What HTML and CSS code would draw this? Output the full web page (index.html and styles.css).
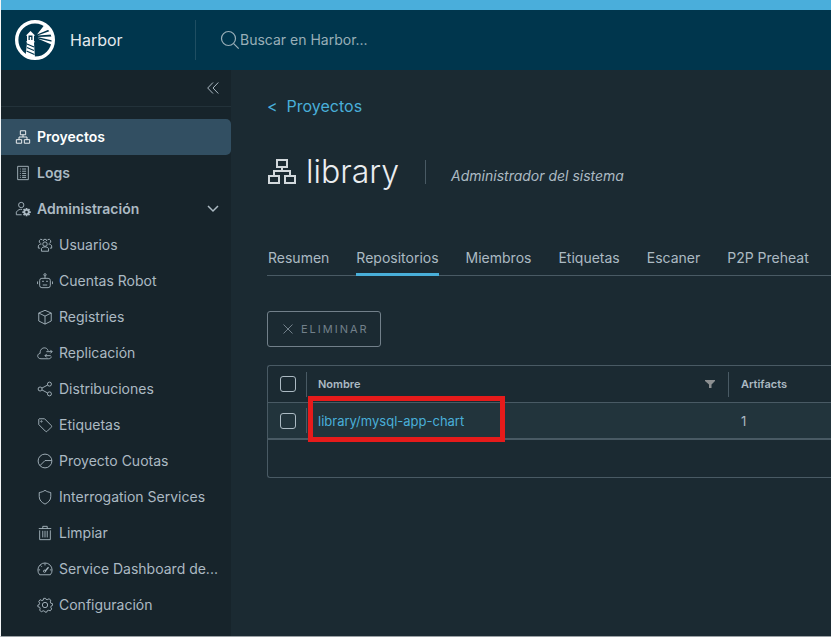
FILE: index.html
```html
<!DOCTYPE html>
<html lang="es">
<head>
<meta charset="utf-8">
<meta name="viewport" content="width=device-width, initial-scale=1">
<title>Harbor</title>
<link rel="stylesheet" href="styles.css">
</head>
<body>
<div class="app">
  <div class="topline"></div>
  <header class="header">
    <a class="brand" href="#">
      <svg class="logo" viewBox="0 0 40 40" aria-hidden="true">
        <circle cx="20" cy="20" r="18.3" fill="none" stroke="#fff" stroke-width="3.4"/>
        <path fill="#fff" d="M11.500 15 15.500 11l4 4v1h-.5v5h.5v1.500h-.5L20 38.500l-9.500-2L12 22.500h-.5V21h.5v-5h-.5zM22 14.500 29 5.500l5 4zM22.500 15.500 35 11l2 3.500zM22.500 17l15-.5v4zM22.500 18.500 38 22l-.5 3z"/>
        <path fill="#00364d" d="M13.500 15.500h4V20h-4z"/>
        <path fill="#fff" d="M14.800 17h1.400v3h-1.400z"/>
        <path d="m12 24 7 3M12 27.500l7 3M11.500 31l8 3.500" stroke="#00364d" stroke-width="1.200"/>
      </svg>
      <span>Harbor</span>
    </a>
    <label class="search">
      <svg class="search-icon" viewBox="0 0 20 20" fill="none" stroke="currentColor" stroke-width="1.200" aria-hidden="true"><circle cx="8.500" cy="8.500" r="7"/><path d="m13.700 13.700 5 5"/></svg>
      <input type="text" placeholder="Buscar en Harbor..." aria-label="Buscar en Harbor">
    </label>
  </header>
  <div class="body">
    <nav class="sidebar">
      <div class="collapse-row">
        <button class="collapse" type="button" aria-label="Contraer menú"><svg viewBox="0 0 12 12"><path d="M6 .5.700 6 6 11.500M11.300.500 6 6l5.300 5.500"/></svg></button>
      </div>
      <ul class="menu">
        <li><a class="item active" href="#"><svg viewBox="0 0 36 36"><path d="M12 4h12v9H12zM3 24h12v8H3zM21 24h12v8H21zM18 13v5M9 24v-6h18v6"/></svg><span>Proyectos</span></a></li>
        <li><a class="item" href="#"><svg viewBox="0 0 36 36"><path d="M6 3h24v30H6zM11 9h2M16 9h9M11 14h2M16 14h9M11 19h2M16 19h9M11 24h2M16 24h9M11 28h2M16 28h9"/></svg><span>Logs</span></a></li>
        <li><button class="item" type="button" aria-expanded="true"><svg viewBox="0 0 36 36"><circle cx="14" cy="9" r="6"/><path d="M15 31H3v-6c3-5 8-7 13-6"/><circle cx="26" cy="25" r="5" stroke-width="4"/><path stroke-width="4" d="M26 15.500v4M26 30.500v4M16.500 25h4M31.500 25h4M19.300 18.300l2.800 2.800M29.900 28.900l2.800 2.800M32.700 18.300l-2.800 2.800M22.100 28.900l-2.800 2.800"/></svg><span>Administración</span><svg class="caret" viewBox="0 0 12 12"><path d="m1 3 5 5 5-5"/></svg></button>
          <ul class="submenu">
            <li><a class="item" href="#"><svg viewBox="0 0 36 36"><circle cx="18" cy="16" r="5"/><path d="M10 32v-6c3-5 13-5 16 0v6zM12 6a4.500 4.500 0 1 0-4 8M24 6a4.500 4.500 0 1 1 4 8M3 25v-5c1-3 4-4 7-4M33 25v-5c-1-3-4-4-7-4M3 25h4M33 25h-4M14 9a4 4 0 1 1 8 0"/></svg><span>Usuarios</span></a></li>
            <li><a class="item" href="#"><svg viewBox="0 0 36 36"><rect x="6" y="12" width="24" height="21" rx="5"/><circle cx="18" cy="4" r="2.500"/><path d="M18 7v5M1 19v6M35 19v6M13 27h10"/><path d="M12 19h3M21 19h3" stroke-width="3"/></svg><span>Cuentas Robot</span></a></li>
            <li><a class="item" href="#"><svg viewBox="0 0 36 36"><path d="m18 3 14 6v18l-14 7-14-7V9zM4 9l14 7 14-7M18 16v18"/></svg><span>Registries</span></a></li>
            <li><a class="item" href="#"><svg viewBox="0 0 36 36"><path d="M32 26c0 3-2 5-6 5H9c-9 0-10-11-2-12C6 4 23 3 25 13M34 15H21M30 11l4 4-4 4M18 24h13M22 20l-4 4 4 4"/></svg><span>Replicación</span></a></li>
            <li><a class="item" href="#"><svg viewBox="0 0 36 36"><circle cx="7" cy="18" r="4.500"/><circle cx="28" cy="7" r="4.500"/><circle cx="28" cy="29" r="4.500"/><path d="m11 16 13-7M11 20l13 7"/></svg><span>Distribuciones</span></a></li>
            <li><a class="item" href="#"><svg viewBox="0 0 36 36"><path d="M4 5v12l15 15q2 2 4 0l9-9q2-2 0-4L17 4H5z"/><circle cx="10" cy="10" r="1.500"/></svg><span>Etiquetas</span></a></li>
            <li><a class="item" href="#"><svg viewBox="0 0 36 36"><circle cx="18" cy="18" r="15.500"/><path d="M33 17H18L7 28"/></svg><span>Proyecto Cuotas</span></a></li>
            <li><a class="item" href="#"><svg viewBox="0 0 36 36"><path d="M18 3c4 3 8 4 13 5v9c0 8-5 13-13 17C10 30 5 25 5 17V8c5-1 9-2 13-5z"/></svg><span>Interrogation Services</span></a></li>
            <li><a class="item" href="#"><svg viewBox="0 0 36 36"><path d="M4 8h28M13 8V3h10v5M6 12v21h24V12M13 13v15M18 13v15M23 13v15"/></svg><span>Limpiar</span></a></li>
            <li><a class="item" href="#"><svg viewBox="0 0 36 36"><path d="M6 31a16 16 0 1 1 24 0zM18 5v5M3 20h4M29 20h4M8 10l3 3"/><path d="m18 23 8-9" stroke-width="3"/><circle cx="17" cy="23" r="2.500"/></svg><span>Service Dashboard de...</span></a></li>
            <li><a class="item" href="#"><svg viewBox="0 0 36 36"><circle cx="18" cy="18" r="6"/><path d="m15 3-1 4-3 1-4-2-3 4 2 4-1 3-3 1v4l4 1 1 3-1 4 4 3 4-2 3 1 1 2h4l1-3 3-1 4 1 3-4-2-4 1-3 3-1v-4l-4-1-1-3 1-4-4-3-4 2-3-1-1-2z"/></svg><span>Configuración</span></a></li>
          </ul>
        </li>
      </ul>
    </nav>
    <main class="content">
      <a class="back" href="#"><span>&lt;</span><span>Proyectos</span></a>
      <div class="title-row">
        <svg class="title-icon" viewBox="0 0 28 28" aria-hidden="true"><path d="M9 2h10v7H9zM1 18h10v7H1zM17 18h10v7H17zM14 9v4M6 18v-5h16v5"/></svg>
        <h1>library</h1>
        <em class="role">Administrador del sistema</em>
      </div>
      <div class="tabs" role="tablist">
        <button type="button" role="tab">Resumen</button>
        <button type="button" role="tab" class="selected" aria-selected="true">Repositorios</button>
        <button type="button" role="tab">Miembros</button>
        <button type="button" role="tab">Etiquetas</button>
        <button type="button" role="tab">Escaner</button>
        <button type="button" role="tab">P2P Preheat</button>
      </div>
      <button class="delete" type="button" disabled><svg viewBox="0 0 12 12" aria-hidden="true"><path d="m1.500 1.500 9 9M10.500 1.500l-9 9"/></svg>ELIMINAR</button>
      <table class="grid">
        <thead>
          <tr>
            <th class="check"><input type="checkbox" aria-label="Seleccionar todo"></th>
            <th class="name"><div class="head-cell"><span>Nombre</span><button class="filter" type="button" aria-label="Filtrar"><svg viewBox="0 0 10 10"><path d="M0 1h10v1L6.500 5.500V9H4V5.500L0 2z"/></svg></button></div></th>
            <th class="count">Artifacts</th>
          </tr>
        </thead>
        <tbody>
          <tr>
            <td class="check"><input type="checkbox" aria-label="Seleccionar library/mysql-app-chart"></td>
            <td class="name marked"><a href="#">library/mysql-app-chart</a><span class="marker"></span></td>
            <td class="count">1</td>
          </tr>
        </tbody>
        <tfoot><tr><td colspan="3"></td></tr></tfoot>
      </table>
    </main>
  </div>
</div>
</body>
</html>
```
FILE: styles.css
```css
* { box-sizing: border-box; }
html { background: #fff; }
body {
  margin: 0;
  font-family: Inter, "Noto Sans", sans-serif;
  font-size: 14px;
  line-height: 20px;
  color: #acbac3;
}
a { color: inherit; text-decoration: none; }
button { font: inherit; color: inherit; background: none; border: 0; padding: 0; }
ul { list-style: none; margin: 0; padding: 0; }
svg { fill: none; stroke: currentColor; flex: none; display: block; }

.app {
  display: flex;
  flex-direction: column;
  min-height: 100vh;
  border-left: 1px solid #f4f6f7;
  border-bottom: 1px solid #9ba1a5;
  overflow: hidden;
}
.topline { height: 10px; background: #4aaedb; }
.header { display: flex; align-items: center; height: 60px; background: #00364d; }
.brand {
  display: flex;
  align-items: center;
  gap: 15px;
  width: 195px;
  height: 40px;
  padding-left: 14px;
  border-right: 1px solid #1f4e62;
  color: #e4eaed;
  font-size: 16px;
}
.logo { width: 40px; height: 40px; stroke: none; }
.search { display: flex; flex: 1; align-items: center; padding-left: 24px; color: #99afb8; }
.search-icon { width: 20px; height: 20px; }
.search input {
  flex: 1;
  min-width: 0;
  padding: 0;
  border: 0;
  outline: 0;
  background: none;
  color: inherit;
  font: inherit;
}
.search input::placeholder { color: #99afb8; opacity: 1; }

.body { display: flex; flex: 1; }
.sidebar { flex: none; width: 230px; background: #17242b; }
.collapse-row {
  display: flex;
  align-items: center;
  justify-content: flex-end;
  height: 37px;
  padding-right: 12px;
  border-bottom: 1px solid #23323a;
}
.collapse svg { width: 12px; height: 12px; }
.menu { padding-top: 12px; }
.item {
  display: flex;
  align-items: center;
  gap: 6px;
  width: 100%;
  height: 36px;
  padding: 0 12px 0 14px;
  font-weight: 600;
  text-align: left;
}
.item svg { width: 16px; height: 16px; stroke-width: 2; }
.item .caret { width: 12px; height: 12px; margin-left: auto; stroke-width: 1.5; }
.item.active { background: #324f62; color: #fff; border-radius: 0 5px 5px 0; }
.submenu .item { padding-left: 36px; font-weight: 400; }

.content {
  display: flex;
  flex: 1;
  flex-direction: column;
  align-items: flex-start;
  min-width: 0;
  padding: 26px 0 0 36px;
  background: #1b2a32;
}
.back { display: flex; gap: 9px; font-size: 16px; color: #49afd9; }
.title-row { display: flex; align-items: center; margin-top: 36px; height: 40px; }
.title-icon { width: 28px; height: 28px; margin-left: 1px; stroke: #d2d8dc; stroke-width: 2; }
h1 { margin: 0 0 0 10px; font-size: 32px; line-height: 40px; font-weight: 300; color: #eaedf0; }
.role {
  display: flex;
  align-items: flex-end;
  height: 24px;
  margin-left: 26px;
  padding: 6px 0 0 25px;
  border-left: 1px solid #495a64;
  font-size: 14px;
  line-height: 16px;
}
.tabs {
  display: flex;
  align-self: stretch;
  gap: 27px;
  margin-top: 51px;
  padding-left: 1px;
  box-shadow: inset 0 -1px #495a64;
}
.tabs button { flex: none; height: 33px; border-bottom: 3px solid transparent; }
.tabs .selected { border-bottom-color: #49afd9; }
.delete {
  display: flex;
  align-items: center;
  gap: 7px;
  height: 36px;
  margin-top: 35px;
  padding: 0 11px 0 14px;
  border: 1px solid #72808a;
  border-radius: 3px;
  color: #72808a;
  font-size: 11px;
  letter-spacing: 2px;
}
.delete svg { width: 12px; height: 12px; }

.grid {
  align-self: stretch;
  margin-top: 18px;
  table-layout: fixed;
  border: 1px solid #495a64;
  border-right: 0;
  border-radius: 3px 0 0 3px;
  border-spacing: 0;
  font-size: 13px;
}
.grid th, .grid td { height: 37px; padding: 0; text-align: left; }
.grid th { font-size: 11px; font-weight: 600; border-bottom: 1px solid #495a64; }
.grid tbody td { background: #22343c; border-bottom: 2px solid #495a64; }
.grid .check { width: 39px; padding-left: 12px; }
.grid .name { width: 422px; padding-left: 11px; }
.grid th.count, .grid td.count { padding-left: 12px; }
.grid th.check, .grid th.name, .grid td.check {
  background-image: linear-gradient(#495a64, #495a64);
  background-size: 1px 25px;
  background-position: right center;
  background-repeat: no-repeat;
}
.check input {
  display: block;
  appearance: none;
  width: 16px;
  height: 16px;
  margin: 0;
  border: 1px solid #acbac3;
  border-radius: 3px;
}
.head-cell { display: flex; align-items: center; justify-content: space-between; padding-right: 14px; }
.filter svg { width: 10px; height: 10px; fill: #8c8f91; stroke: none; }
.grid a { color: #49afd9; }
.marked { position: relative; }
.marker {
  position: absolute;
  top: -7px;
  left: 1px;
  width: 197px;
  height: 46px;
  border: 5px solid #e61b1b;
  pointer-events: none;
}
```
